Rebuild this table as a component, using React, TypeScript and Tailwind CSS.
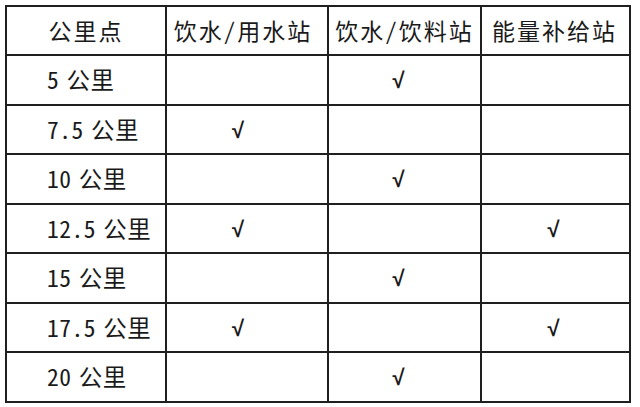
import React from 'react';

const rows: { km: string; water: boolean; drink: boolean; energy: boolean }[] = [
  { km: '5 公里', water: false, drink: true, energy: false },
  { km: '7.5 公里', water: true, drink: false, energy: false },
  { km: '10 公里', water: false, drink: true, energy: false },
  { km: '12.5 公里', water: true, drink: false, energy: true },
  { km: '15 公里', water: false, drink: true, energy: false },
  { km: '17.5 公里', water: true, drink: false, energy: true },
  { km: '20 公里', water: false, drink: true, energy: false },
];

// Liberation Sans draws √ without the top bar, close to the doc's tick
const Check = ({ on, shift }: { on: boolean; shift: string }) =>
  on ? (
    <span
      className={`inline-block text-[22px] font-bold leading-none ${shift}`}
      style={{ fontFamily: '"Liberation Sans", sans-serif' }}
    >
      √
    </span>
  ) : null;

export default function App() {
  return (
    <div
      className="w-[640px] h-[407px] bg-white text-[#1a1a1a] pt-[5px] pl-[5px]"
      style={{ fontFamily: '"Noto Sans Mono CJK SC", "Noto Sans CJK SC", sans-serif' }}
    >
      <table className="border-collapse table-fixed text-[23px] leading-none">
        <colgroup>
          <col className="w-[160px]" />
          <col className="w-[162px]" />
          <col className="w-[153px]" />
          <col className="w-[149px]" />
        </colgroup>
        <thead>
          <tr className="h-[49px]">
            <th className="border-2 border-[#1f1f1f] font-normal text-center tracking-[2px]">公里点</th>
            <th className="border-2 border-[#1f1f1f] font-normal text-center pr-[8px] tracking-[2px]">饮水/用水站</th>
            <th className="border-2 border-[#1f1f1f] font-normal text-center tracking-[2px]">饮水/饮料站</th>
            <th className="border-2 border-[#1f1f1f] font-normal text-left pl-[10px] tracking-[2px]">能量补给站</th>
          </tr>
        </thead>
        <tbody>
          {rows.map((r) => (
            <tr key={r.km} className="h-[49.5px]">
              <td className="border-2 border-[#1f1f1f] pl-[40px] text-[23.5px] tracking-[0.5px] [word-spacing:-5px]">
                {r.km}
              </td>
              <td className="border-2 border-[#1f1f1f] text-center">
                <Check on={r.water} shift="-translate-x-[9px]" />
              </td>
              <td className="border-2 border-[#1f1f1f] text-center">
                <Check on={r.drink} shift="-translate-x-[6px]" />
              </td>
              <td className="border-2 border-[#1f1f1f] text-center">
                <Check on={r.energy} shift="-translate-x-[2px]" />
              </td>
            </tr>
          ))}
        </tbody>
      </table>
    </div>
  );
}
